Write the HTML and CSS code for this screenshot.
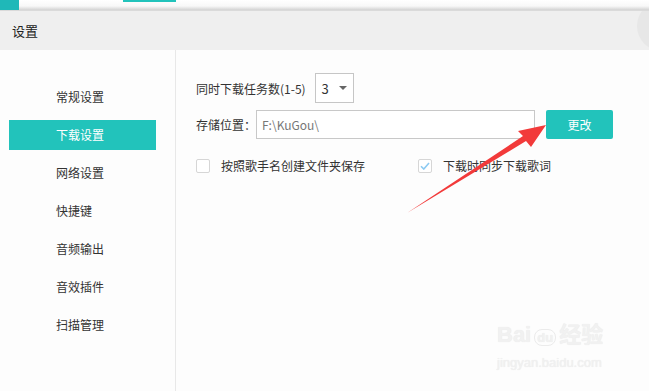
FILE: index.html
```html
<!DOCTYPE html>
<html lang="zh-CN">
<head>
    <meta charset="UTF-8">
    <meta name="viewport" content="width=device-width, initial-scale=1.0">
    <title>设置</title>
    <link rel="stylesheet" href="styles.css">
</head>
<body>
    <div class="topbar">
        <span class="top-block"></span>
        <span class="top-line"></span>
    </div>
    <div class="header">
        <span class="title">设置</span>
        <span class="header-circle"></span>
    </div>
    <div class="main">
        <ul class="sidebar">
            <li>常规设置</li>
            <li class="active">下载设置</li>
            <li>网络设置</li>
            <li>快捷键</li>
            <li>音频输出</li>
            <li>音效插件</li>
            <li>扫描管理</li>
        </ul>
        <div class="content">
            <div class="row">
                <span class="label">同时下载任务数(1-5)</span>
                <div class="select">
                    <span>3</span>
                    <span class="caret"></span>
                </div>
            </div>
            <div class="row path-row">
                <span class="label path-label">存储位置：</span>
                <div class="path-input">F:\KuGou\</div>
                <button class="change-btn">更改</button>
            </div>
            <div class="row check-row">
                <label class="check first">
                    <span class="box"></span>
                    按照歌手名创建文件夹保存
                </label>
                <label class="check">
                    <span class="box checked">
                        <svg width="10" height="8" viewBox="0 0 10 8"><path d="M1 4.2 L3.8 7 L9 1" fill="none" stroke="#8ccaf2" stroke-width="1.6"/></svg>
                    </span>
                    下载时同步下载歌词
                </label>
            </div>
        </div>
    </div>

    <svg class="arrow" width="649" height="391" viewBox="0 0 649 391">
        <polygon points="407,213 523,136 518,131 546,125 531,147 526,141" fill="#f23a3a"/>
    </svg>

    <div class="watermark">
        <div class="wm-logo">Bai<span class="wm-du">du</span>经验</div>
        <div class="wm-url">jingyan.baidu.com</div>
    </div>
</body>
</html>
```

FILE: styles.css
```css
body {
    margin: 0;
    width: 649px;
    height: 391px;
    overflow: hidden;
    position: relative;
    background: #fdfdfd;
    font-family: "Microsoft YaHei", "Noto Sans CJK SC", "Noto Sans", sans-serif;
    font-size: 12px;
    color: #333;
}
.topbar {
    height: 11px;
    background: linear-gradient(#ffffff 0, #f8f8f8 6px, #d2d2d2 10px, #e2e2e2 11px);
    position: relative;
}
.top-block {
    display: block;
    width: 19px;
    height: 10px;
    background: #1fb8b8;
}
.top-line {
    position: absolute;
    left: 123px;
    top: 0;
    width: 53px;
    height: 2px;
    background: #22c3bb;
}
.header {
    height: 39px;
    background: #efefef;
    display: flex;
    align-items: center;
    padding-left: 12px;
    position: relative;
    overflow: hidden;
}
.title {
    font-size: 13px;
    color: #222;
}
.header-circle {
    position: absolute;
    left: 637px;
    top: -10px;
    width: 50px;
    height: 50px;
    border-radius: 50%;
    background: #e7e7e7;
}
.main {
    display: flex;
    height: 341px;
}
.sidebar {
    list-style: none;
    margin: 0;
    padding: 32px 0 0 9px;
    width: 166px;
    border-right: 1px solid #e8e8e8;
    display: flex;
    flex-direction: column;
    gap: 8px;
}
.sidebar li {
    width: 100px;
    height: 30px;
    line-height: 30px;
    padding-left: 47px;
    color: #333;
}
.sidebar li.active {
    background: #22c3bb;
    color: #fff;
}
.content {
    padding: 23px 0 0 20px;
    flex: 1;
}
.row {
    display: flex;
    align-items: center;
}
.select {
    margin-left: 9px;
    border: 1px solid #c6c6c6;
    background: #fff;
    display: flex;
    align-items: center;
    justify-content: space-between;
    padding: 0 6px 0 6px;
    box-sizing: border-box;
    width: 39px;
    height: 30px;
    font-size: 13px;
}
.caret {
    width: 0;
    height: 0;
    border-left: 4px solid transparent;
    border-right: 4px solid transparent;
    border-top: 4px solid #666;
}
.path-row {
    margin-top: 7px;
}
.path-label {
    width: 60px;
}
.path-input {
    width: 279px;
    height: 29px;
    box-sizing: border-box;
    border: 1px solid #c8c8c8;
    background: #fff;
    line-height: 27px;
    padding-left: 5px;
    color: #777;
    font-size: 12px;
}
.change-btn {
    margin-left: 11px;
    margin-top: -1px;
    width: 67px;
    height: 29px;
    border: none;
    border-radius: 2px;
    background: #22c3bb;
    color: #fff;
    font-family: inherit;
    font-size: 12px;
}
.check-row {
    margin-top: 18px;
}
.check {
    display: flex;
    align-items: center;
    gap: 11px;
}
.check.first {
    width: 222px;
}
.box {
    width: 14px;
    height: 14px;
    box-sizing: border-box;
    border: 1px solid #d6d6d6;
    border-radius: 2px;
    background: #fff;
    display: flex;
    align-items: center;
    justify-content: center;
}
.arrow {
    position: absolute;
    left: 0;
    top: 0;
    pointer-events: none;
}
.watermark {
    position: absolute;
    left: 497px;
    top: 322px;
    color: #f1f1f1;
    text-shadow: 0 0 1px #e6e6e6;
    font-family: "Liberation Sans", "Noto Sans CJK SC", sans-serif;
}
.wm-logo {
    font-size: 22px;
    font-weight: bold;
    line-height: 26px;
}
.wm-du {
    font-size: 13px;
    border: 1px solid #ebebeb;
    border-radius: 8px;
    padding: 0 2px;
    margin: 0 3px;
}
.wm-url {
    font-size: 13px;
    line-height: 18px;
    margin-top: 3px;
}
```
